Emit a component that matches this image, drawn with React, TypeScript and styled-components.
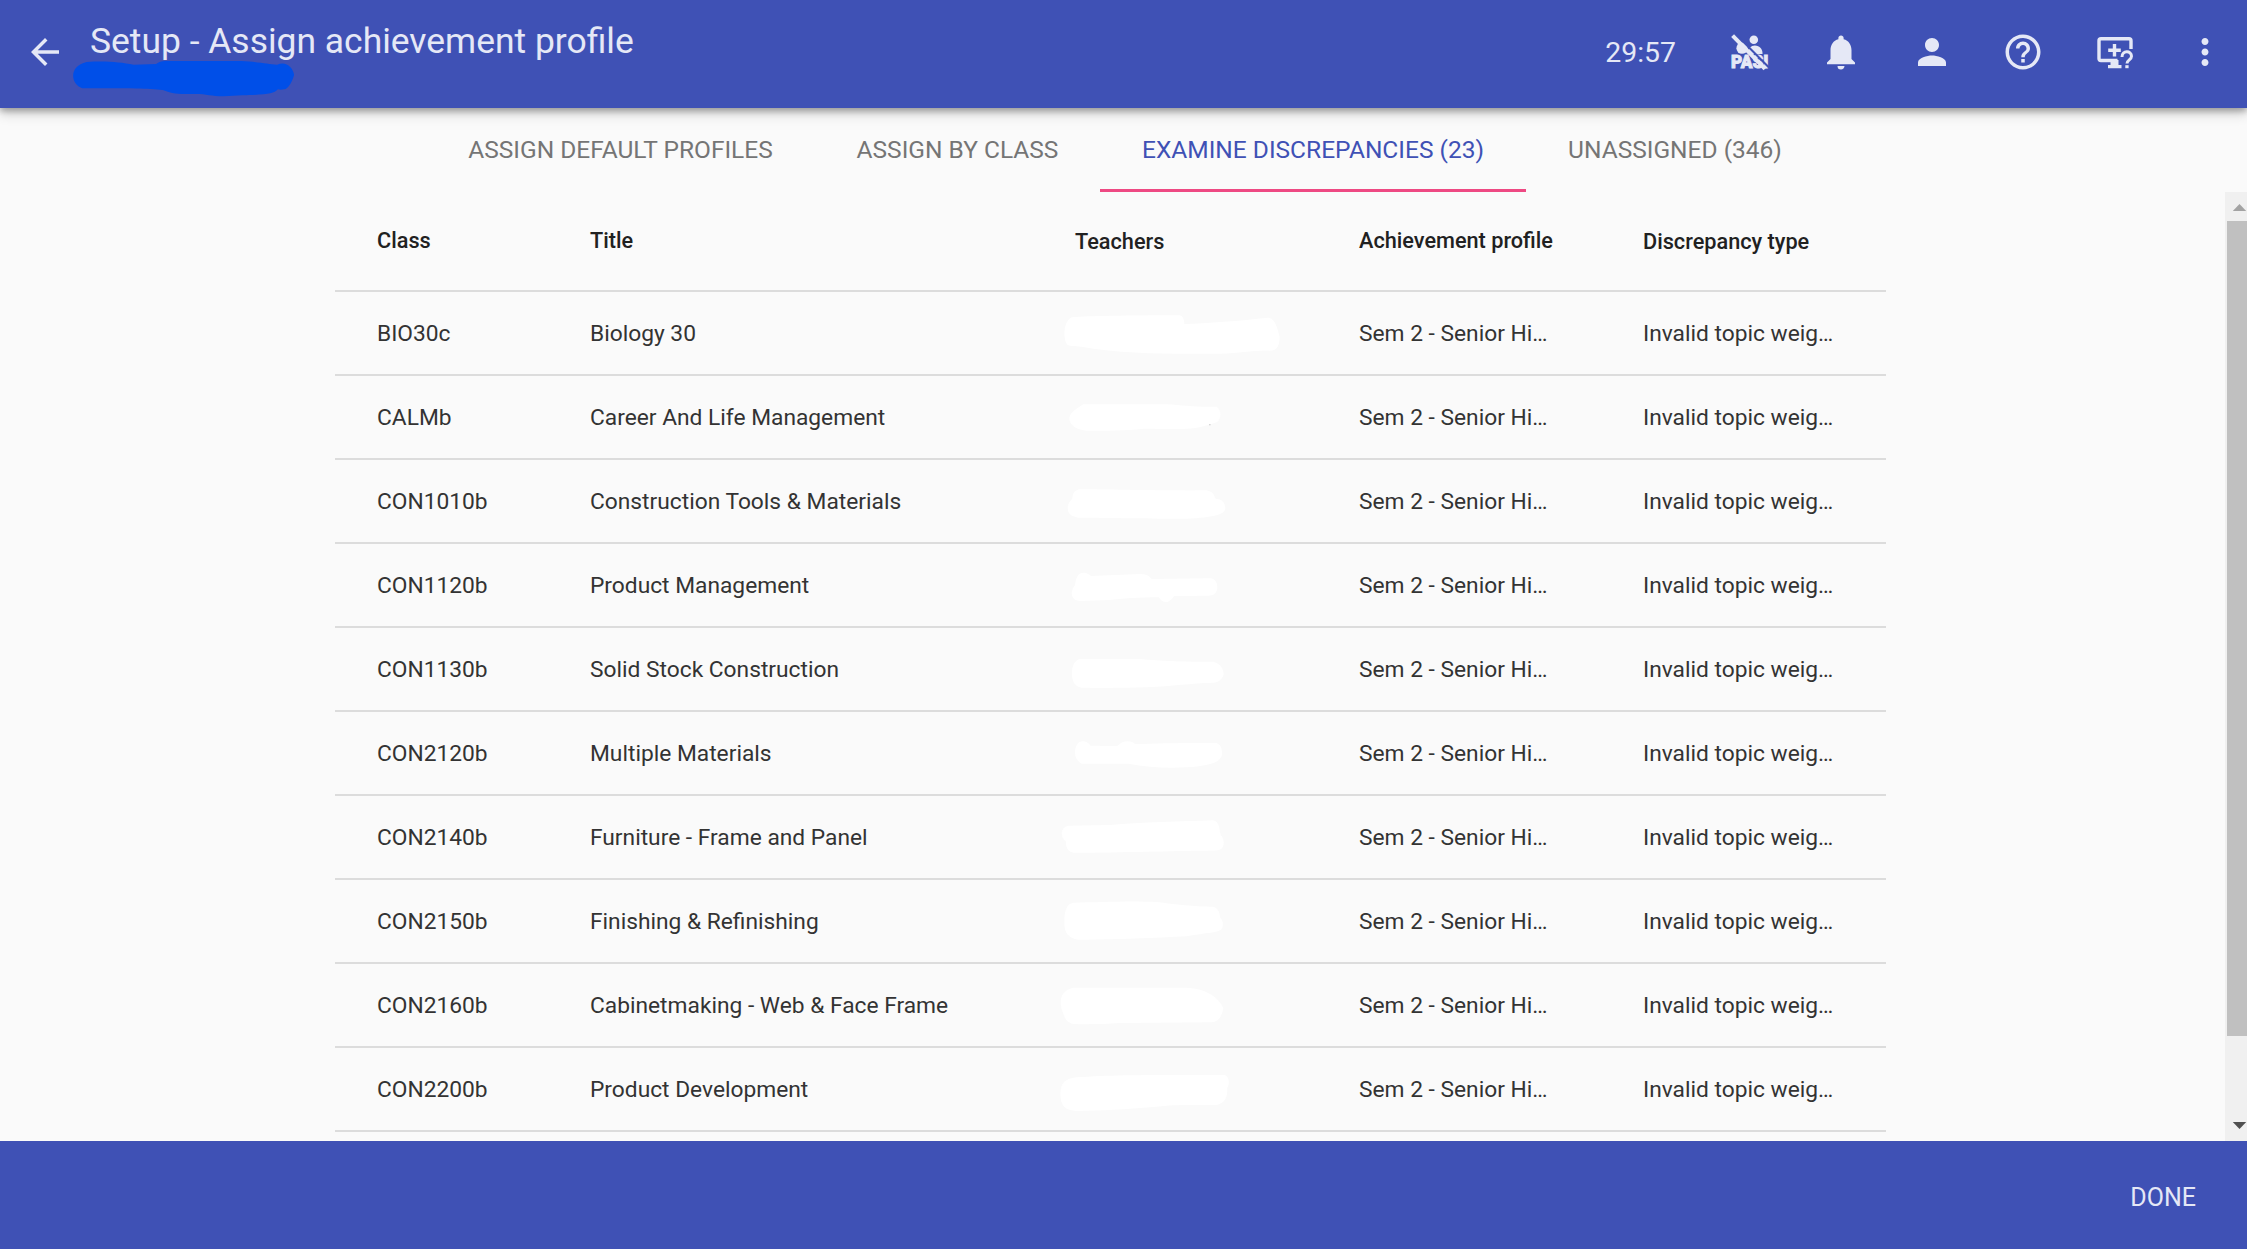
import React from "react";
import styled, { createGlobalStyle } from "styled-components";
import { MdArrowBack, MdHelpOutline, MdMoreVert, MdNotifications, MdPerson } from "react-icons/md";

const GlobalStyle = createGlobalStyle`
  *, *::before, *::after { box-sizing: border-box; }
  body {
    margin: 0;
    background: #fafafa;
    font-family: Roboto, "Liberation Sans", sans-serif;
    overflow: hidden;
  }
`;

const Page = styled.div`
  display: flex;
  flex-direction: column;
  height: 1249px;
  width: 2247px;
  background: #fafafa;
`;

const Header = styled.header`
  position: relative;
  z-index: 1;
  flex: none;
  display: flex;
  align-items: flex-start;
  height: 108px;
  padding-left: 24px;
  background: #3f51b5;
  color: #e5e8f6;
  box-shadow: 0 3px 6px rgba(0, 0, 0, 0.26), 0 5px 12px rgba(0, 0, 0, 0.2);
`;

const IconButton = styled.button`
  display: flex;
  align-items: center;
  justify-content: center;
  flex: none;
  width: 42px;
  height: 42px;
  margin: 31px 0 0;
  padding: 0;
  border: 0;
  background: none;
  color: inherit;
  svg { display: block; width: 42px; height: 42px; }
`;

const Heading = styled.div`
  flex: 1;
  padding: 20px 0 0 24px;
`;

const Title = styled.h1`
  margin: 0;
  font-size: 35.45px;
  font-weight: 400;
  line-height: 42px;
  white-space: nowrap;
`;

const Subtitle = styled.svg`
  display: block;
  width: 224px;
  height: 37.3px;
  margin: -2.500px 0 0 -18.6px;
`;

const Clock = styled.span`
  margin-top: 32px;
  font-size: 28.4px;
  line-height: 42px;
`;

const Actions = styled.nav`
  display: flex;
  gap: 49px;
  padding: 0 21px 0 53px;
`;

const Tabs = styled.div`
  flex: none;
  display: flex;
  height: 84px;
  padding-left: 426px;
`;

const Tab = styled.button<{ $active?: boolean; $width: number }>`
  width: ${(p) => p.$width}px;
  height: 84px;
  padding: 2px 0 0;
  border: 0;
  border-bottom: 3px solid ${(p) => (p.$active ? "#ee4983" : "transparent")};
  background: none;
  color: ${(p) => (p.$active ? "#3f51b5" : "#757575")};
  font: 400 24.5px/79px Roboto, "Liberation Sans", sans-serif;
  white-space: nowrap;
`;

const Content = styled.main`
  flex: 1;
  min-height: 0;
  display: flex;
  justify-content: space-between;
`;

const Table = styled.div`
  width: 1551px;
  margin-left: 335px;
  color: #333;
`;

const Row = styled.div<{ $head?: boolean }>`
  display: grid;
  grid-template-columns: 213px 485px 284px 284px 1fr;
  height: ${(p) => (p.$head ? 100 : 84)}px;
  padding-left: 42px;
  border-bottom: 2px solid #dcdcdc;
  font-size: ${(p) => (p.$head ? 21.7 : 22.75)}px;
  font-weight: ${(p) => (p.$head ? 500 : 400)};
  line-height: ${(p) => (p.$head ? 97 : 84)}px;
  color: ${(p) => (p.$head ? "#212121" : "#333")};
`;

const Cell = styled.div<{ $drop?: boolean }>`
  padding-top: ${(p) => (p.$drop ? 1 : 0)}px;
  white-space: nowrap;
`;

const Redaction = styled.svg`
  display: block;
  width: 260px;
  height: 82px;
  margin-left: -35px;
`;

const Scrollbar = styled.div`
  display: flex;
  flex-direction: column;
  width: 22px;
  padding: 0 0 0 2px;
  background: #f0f0f0;
`;

const ScrollArrow = styled.svg<{ $height: number }>`
  display: block;
  flex: none;
  width: 20px;
  height: ${(p) => p.$height}px;
`;

const Thumb = styled.div`
  height: 815px;
  margin-bottom: auto;
  background: #c0c0c0;
`;

const Footer = styled.footer`
  flex: none;
  display: flex;
  justify-content: flex-end;
  height: 108px;
  padding-right: 51px;
  background: #3f51b5;
`;

const DoneButton = styled.button`
  padding: 5px 0 0;
  border: 0;
  background: none;
  color: #e5e8f6;
  font: 400 25px/103px Roboto, "Liberation Sans", sans-serif;
`;

const PasiLabel = styled.text`
  font: 900 17.8px Roboto, "Liberation Sans", sans-serif;
`;

const PasiOff = () => (
  <svg viewBox="0 0 42 42" fill="currentColor">
    <circle cx="24.8" cy="8.8" r="4.3" />
    <circle cx="13" cy="17.2" r="5.6" />
    <path d="M19 22c0-4.500 3.200-7.500 6.800-7.500 5 0 8 4 7.700 8.500h-14z" />
    <PasiLabel x="2" y="37" textLength="37.500" lengthAdjust="spacingAndGlyphs" stroke="currentColor" strokeWidth=".9">PASI</PasiLabel>
    <path d="M6.800 3.200L40 36.500" stroke="#3f51b5" strokeWidth="2" />
    <path d="M3.600 4.600L36 37.800" stroke="currentColor" strokeWidth="4" />
  </svg>
);

const MonitorHelp = () => (
  <svg viewBox="0 0 42 42" fill="none" stroke="currentColor" strokeWidth="3.400">
    <path d="M24.500 29.500H8a2 2 0 0 1-2-2V9.800a2 2 0 0 1 2-2h28a2 2 0 0 1 2 2V18" />
    <path d="M21.500 13v12.500M15.200 19.300h12.600" />
    <path d="M17.500 29h8v5h3v3.200H15V34h2.500z" fill="currentColor" stroke="none" />
    <path d="M29 26c0-7 9.500-6.600 9.500-.8 0 3.600-4.500 3.700-4.500 7.300" strokeWidth="3" />
    <path d="M32.300 34.200h3.300v3h-3.300z" fill="currentColor" stroke="none" />
  </svg>
);

type Entry = { code: string; title: string; mask: string; speck?: [number, number] };

const entries: Entry[] = [
  { code: "BIO30c", title: "Biology 30", mask: "M95 52C150 48 250 46 420 46Q432 50 433 72C500 70 600 62 685 53C705 55 712 85 719 110C719 135 712 152 690 152C640 150 600 161 540 161C400 162 250 163 130 141C110 139 95 141 85 136C68 125 68 65 95 52Z" },
  { code: "CALMb", title: "Career And Life Management", speck: [507, 120], mask: "M130 61L380 61C430 64 470 70 530 68C545 78 545 105 530 115C490 128 460 136 420 135L310 134C260 140 190 140 140 140C110 138 88 122 88 105C88 90 100 80 130 61Z" },
  { code: "CON1010b", title: "Construction Tools & Materials", mask: "M120 64C200 64 350 68 500 67Q520 70 527 92C545 92 557 105 556 122C552 140 520 148 440 152C340 152 200 150 115 149C90 145 83 135 83 118C84 105 92 98 97 92C98 75 105 66 120 64Z" },
  { code: "CON1120b", title: "Product Management", mask: "M105 100C108 75 115 62 130 62C145 62 150 70 153 72L300 66C325 66 330 76 335 81L510 79C528 80 532 95 532 108C530 125 520 131 505 131L402 132C395 145 385 150 378 150C366 150 360 142 357 136C300 136 240 140 210 144L120 147C103 146 95 135 95 122Q96 108 105 100Z" },
  { code: "CON1130b", title: "Solid Stock Construction", mask: "M120 69L300 69C380 76 440 78 520 77C545 85 550 100 551 114C548 130 535 140 520 140C450 142 400 150 320 154C250 156 180 156 125 155C103 150 96 135 96 113C95 90 105 72 120 69Z" },
  { code: "CON2120b", title: "Multiple Materials", mask: "M112 72C120 60 140 60 152 77L232 78C245 60 275 60 285 72C350 70 450 68 530 69C545 75 546 90 546 102C543 125 520 136 440 142C380 145 320 142 265 131L125 131C105 120 98 95 112 72Z" },
  { code: "CON2140b", title: "Furniture - Frame and Panel", mask: "M85 65L210 63C300 55 430 52 520 49C540 55 537 75 542 92C553 105 553 120 548 130C542 140 530 140 500 140C400 140 250 146 100 146C80 142 78 125 78 113C60 98 60 70 85 65Z" },
  { code: "CON2150b", title: "Finishing & Refinishing", mask: "M100 44C180 42 280 38 350 42C430 52 470 56 520 56C538 62 538 75 541 90C551 100 550 115 545 124C535 133 500 135 440 145C340 150 200 156 115 155C85 150 73 135 73 105C73 65 80 48 100 44Z" },
  { code: "CON2160b", title: "Cabinetmaking - Web & Face Frame", mask: "M100 47L440 47C500 50 535 75 550 108C545 135 535 150 515 151L240 153C190 157 130 157 100 156C75 150 72 130 68 120C56 90 60 55 100 47Z" },
  { code: "CON2200b", title: "Product Development", mask: "M110 64C220 56 350 57 555 57C570 65 568 85 562 95C563 125 555 140 530 147C460 148 420 144 340 153C260 160 180 164 110 165C75 163 62 150 61 115C62 80 75 68 110 64Z" },
];

export default function App() {
  return (
    <Page>
      <GlobalStyle />
      <Header>
        <IconButton aria-label="Back"><MdArrowBack /></IconButton>
        <Heading>
          <Title>Setup - Assign achievement profile</Title>
          <Subtitle viewBox="160 178 500 112" preserveAspectRatio="none">
            <path fill="#004fe8" d="M195 184C240 180 270 185 300 192L350 190Q358 181 370 181L540 181C580 184 600 190 620 192C640 180 655 200 658 222C655 240 645 265 636 266Q627 268 622 266C610 284 590 281 500 287C475 287 460 280 440 280C400 280 390 281 365 268C330 264 300 263 185 263C158 250 155 195 195 184Z" />
          </Subtitle>
        </Heading>
        <Clock>29:57</Clock>
        <Actions>
          <IconButton aria-label="PASI disconnected"><PasiOff /></IconButton>
          <IconButton aria-label="Notifications"><MdNotifications /></IconButton>
          <IconButton aria-label="Account"><MdPerson /></IconButton>
          <IconButton aria-label="Help"><MdHelpOutline /></IconButton>
          <IconButton aria-label="Remote support"><MonitorHelp /></IconButton>
          <IconButton aria-label="More"><MdMoreVert /></IconButton>
        </Actions>
      </Header>
      <Tabs>
        <Tab $width={389}>ASSIGN DEFAULT PROFILES</Tab>
        <Tab $width={285}>ASSIGN BY CLASS</Tab>
        <Tab $width={426} $active>EXAMINE DISCREPANCIES (23)</Tab>
        <Tab $width={298}>UNASSIGNED (346)</Tab>
      </Tabs>
      <Content>
        <Table>
          <Row $head>
            <Cell>Class</Cell>
            <Cell>Title</Cell>
            <Cell $drop>Teachers</Cell>
            <Cell>Achievement profile</Cell>
            <Cell $drop>Discrepancy type</Cell>
          </Row>
          {entries.map(({ code, title, mask, speck }) => (
            <Row key={code}>
              <Cell>{code}</Cell>
              <Cell>{title}</Cell>
              <Redaction viewBox="0 -24 780 246">
                <path d={mask} fill="#fff" />
                {speck && <rect x={speck[0]} y={speck[1]} width="5" height="4" fill="#d8d8d8" />}
              </Redaction>
              <Cell>Sem 2 - Senior Hi…</Cell>
              <Cell>Invalid topic weig…</Cell>
            </Row>
          ))}
        </Table>
        <Scrollbar>
          <ScrollArrow $height={29} viewBox="0 0 20 29"><path d="M12.500 12l6.700 7H5.800z" fill="#a3a3a3" /></ScrollArrow>
          <Thumb />
          <ScrollArrow $height={29} viewBox="0 0 20 29"><path d="M12.500 17l6.700-7H5.800z" fill="#505050" /></ScrollArrow>
        </Scrollbar>
      </Content>
      <Footer>
        <DoneButton>DONE</DoneButton>
      </Footer>
    </Page>
  );
}
